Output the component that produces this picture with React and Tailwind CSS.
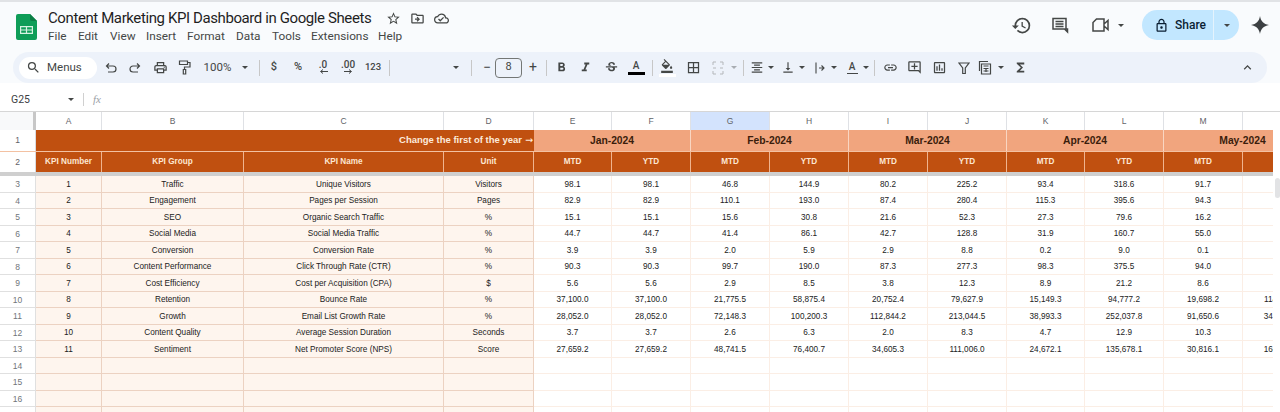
import React from "react";
import {
  MdSearch, MdOutlinePrint, MdStarBorder, MdOutlineDriveFileMove,
  MdOutlineCloudDone, MdHistory, MdOutlineLock,
  MdFormatBold, MdFormatItalic, MdStrikethroughS, MdFormatColorFill, MdBorderAll, MdInsertLink,
  MdOutlineAddComment, MdOutlineInsertChart, MdFunctions, MdExpandLess,
  MdFormatAlignCenter, MdVerticalAlignBottom,
} from "react-icons/md";

const GRID = "grid grid-cols-[36px_66px_142px_200px_90px_78px_79px_79px_79px_79px_79px_78px_79px_79px_79px]";
const COLS = ["A","B","C","D","E","F","G","H","I","J","K","L","M",""];
const META = [
  ["1","Traffic","Unique Visitors","Visitors"],
  ["2","Engagement","Pages per Session","Pages"],
  ["3","SEO","Organic Search Traffic","%"],
  ["4","Social Media","Social Media Traffic","%"],
  ["5","Conversion","Conversion Rate","%"],
  ["6","Content Performance","Click Through Rate (CTR)","%"],
  ["7","Cost Efficiency","Cost per Acquisition (CPA)","$"],
  ["8","Retention","Bounce Rate","%"],
  ["9","Growth","Email List Growth Rate","%"],
  ["10","Content Quality","Average Session Duration","Seconds"],
  ["11","Sentiment","Net Promoter Score (NPS)","Score"],
  ["","","",""],["","","",""],["","","",""],["","","",""],
];
const DATA = [
  ["98.1","98.1","46.8","144.9","80.2","225.2","93.4","318.6","91.7","47.9"],
  ["82.9","82.9","110.1","193.0","87.4","280.4","115.3","395.6","94.3","48.2"],
  ["15.1","15.1","15.6","30.8","21.6","52.3","27.3","79.6","16.2",""],
  ["44.7","44.7","41.4","86.1","42.7","128.8","31.9","160.7","55.0","25.4"],
  ["3.9","3.9","2.0","5.9","2.9","8.8","0.2","9.0","0.1",""],
  ["90.3","90.3","99.7","190.0","87.3","277.3","98.3","375.5","94.0","46.3"],
  ["5.6","5.6","2.9","8.5","3.8","12.3","8.9","21.2","8.6",""],
  ["37,100.0","37,100.0","21,775.5","58,875.4","20,752.4","79,627.9","15,149.3","94,777.2","19,698.2","114,475.4"],
  ["28,052.0","28,052.0","72,148.3","100,200.3","112,844.2","213,044.5","38,993.3","252,037.8","91,650.6","343,688.4"],
  ["3.7","3.7","2.6","6.3","2.0","8.3","4.7","12.9","10.3",""],
  ["27,659.2","27,659.2","48,741.5","76,400.7","34,605.3","111,006.0","24,672.1","135,678.1","30,816.1","166,494.2"],
  ["","","","","","","","","",""],["","","","","","","","","",""],["","","","","","","","","",""],["","","","","","","","","",""],
];
const MONTHS = ["Jan-2024","Feb-2024","Mar-2024","Apr-2024","May-2024"];
const SUBS = ["MTD","YTD","MTD","YTD","MTD","YTD","MTD","YTD","MTD",""];

const Slot = ({ className = "", children }) => (
  <div className={`flex items-center justify-center shrink-0 text-[#444746] ${className}`}>{children}</div>
);
const Sep = ({ className = "" }) => (
  <Slot className={className}><div className="w-px h-[16px] bg-[#c7c7c7]" /></Slot>
);
const Caret = ({ className = "w-[8px]" }) => (
  <Slot className={className}><div className="w-0 h-0 border-x-[3px] border-x-transparent border-t-[3px] border-t-[#444746]" /></Slot>
);
const Arrow = ({ flip }) => (
  <svg width="9" height="5" viewBox="0 0 9 5" className={flip ? "" : "rotate-180"}><path d="M0 2.500h7M5 .5l2.500 2-2.500 2" fill="none" stroke="#444746" strokeWidth="1" /></svg>
);
const Ico = ({ w = 14, h = 14, d, sw = 1.2, stroke = "#444746" }) => (
  <svg width={w} height={h} viewBox={`0 0 ${w} ${h}`} fill="none" stroke={stroke} strokeWidth={sw}><path d={d} /></svg>
);

function SheetsLogo() {
  return (
    <svg width="21" height="26" viewBox="0 0 21 26">
      <path d="M2 0h12l7 7v17a2 2 0 0 1-2 2H2a2 2 0 0 1-2-2V2a2 2 0 0 1 2-2z" fill="#0f9d58" />
      <path d="M14 0l7 7h-5a2 2 0 0 1-2-2z" fill="#0b7d45" />
      <path d="M4 12h13v8H4z M5.200 13.200v2.200h4.700v-2.200z M11.100 13.200v2.200h4.700v-2.200z M5.200 16.600v2.200h4.700v-2.200z M11.100 16.600v2.200h4.700v-2.200z" fill="#d8f3e3" fillRule="evenodd" />
    </svg>
  );
}
function Sparkle() {
  return (
    <svg width="18" height="18" viewBox="0 0 18 18"><path d="M9 0c.8 5 3.400 8 9 9-5.600 1-8.200 4-9 9-.8-5-3.400-8-9-9 5.600-1 8.200-4 9-9z" fill="#3c4043" /></svg>
  );
}

function TitleBar() {
  return (
    <div className="h-[50px] flex shrink-0 pl-[16px]">
      <div className="w-[32px] pt-[12px] shrink-0"><SheetsLogo /></div>
      <div className="w-[957px] shrink-0 pt-[6px]">
        <div className="flex items-center h-[21px]">
          <span className="text-[15px] tracking-[-0.4px] leading-[21px] text-[#1f1f1f] font-['Roboto',sans-serif] w-[338px] whitespace-nowrap">Content Marketing KPI Dashboard in Google Sheets</span>
          <MdStarBorder className="text-[#444746] w-[15px] h-[15px] mr-[9px]" />
          <MdOutlineDriveFileMove className="text-[#444746] w-[15px] h-[15px] mr-[9px]" />
          <MdOutlineCloudDone className="text-[#444746] w-[15px] h-[15px]" />
        </div>
        <div className="flex h-[17px] -mt-[1px] items-center text-[11.800px] text-[#444746] font-['Roboto',sans-serif]">
          <span className="w-[30px]">File</span><span className="w-[32px]">Edit</span><span className="w-[36px]">View</span>
          <span className="w-[41px]">Insert</span><span className="w-[49px]">Format</span><span className="w-[36px]">Data</span>
          <span className="w-[39px]">Tools</span><span className="w-[67px]">Extensions</span><span>Help</span>
        </div>
      </div>
      <div className="flex items-start flex-1 pt-[8px]">
        <Slot className="w-[32px] h-[30px]"><MdHistory className="w-[21px] h-[21px]" /></Slot>
        <Slot className="ml-[7px] w-[32px] h-[30px]">
          <Ico w={18} h={18} sw={1.500} d="M2 2.500h13v10.500h1.500v3l-3-3H2z M4.500 5.500h8 M4.500 8h8 M4.500 10.500h8" />
        </Slot>
        <Slot className="ml-[11px] w-[28px] h-[30px]">
          <Ico w={20} h={18} sw={1.500} d="M5.500 3h7.500v12H2V6.500z M13 8l4-3.500v9L13 10" />
        </Slot>
        <Caret className="ml-[2px] w-[8px] h-[30px]" />
        <div className="ml-[17px] w-[97px] h-[30px] rounded-full bg-[#c2e7ff] flex items-center text-[#0b1f33] font-['Roboto',sans-serif] text-[12px] font-medium shrink-0">
          <MdOutlineLock className="w-[15px] h-[15px] ml-[12px] mr-[6px]" />
          <span className="w-[38px]">Share</span>
          <div className="w-px h-full bg-[#e4f3fd]" />
          <Caret className="w-[25px]" />
        </div>
        <Slot className="ml-[12px] w-[18px] h-[30px]"><Sparkle /></Slot>
      </div>
    </div>
  );
}

function Toolbar() {
  const txt = "font-['Roboto',sans-serif] text-[#444746]";
  return (
    <div className="mx-[13px] h-[31px] rounded-full bg-[#edf2fa] flex items-center pl-[6px] shrink-0">
      <div className="w-[78px] h-[22px] bg-white rounded-full flex items-center shrink-0">
        <MdSearch className="ml-[7px] w-[15px] h-[15px] text-[#444746]" />
        <span className={`ml-[6px] text-[11.500px] ${txt}`}>Menus</span>
      </div>
      <Slot className="w-[25px] ml-px"><Ico w={12} h={12} d="M4 1.500L1.500 4 4 6.500M1.500 4H8a3 3 0 0 1 0 6H3" /></Slot>
      <Slot className="w-[23px]"><Ico w={12} h={12} d="M8 1.500L10.500 4 8 6.500M10.500 4H4a3 3 0 0 0 0 6h5" /></Slot>
      <Slot className="w-[28px]"><MdOutlinePrint className="w-[15px] h-[15px]" /></Slot>
      <Slot className="w-[20px]"><Ico w={13} h={15} d="M1.500 1h8v3.500h-8z M9.500 2.500h2.500v4.500H6.500v2.500 M5.300 9.500h2.400v4.500H5.300z" /></Slot>
      <Slot className={`w-[44px] text-[11.500px] pl-[3px] ${txt}`}>100%</Slot>
      <Caret className="w-[14px]" />
      <Sep className="w-[14px]" />
      <Slot className={`w-[16px] text-[11px] font-medium ${txt}`}>$</Slot>
      <Slot className={`w-[32px] text-[11px] font-medium ${txt}`}>%</Slot>
      <Slot className="w-[18px] flex-col leading-none">
        <span className={`text-[10px] leading-[8px] font-medium ${txt}`}>.0</span><Arrow />
      </Slot>
      <Slot className="w-[32px] flex-col leading-none">
        <span className={`text-[10px] leading-[8px] font-medium ${txt}`}>.00</span><Arrow flip />
      </Slot>
      <Slot className={`w-[18px] text-[9.500px] font-medium ${txt}`}>123</Slot>
      <Sep className="w-[14px]" />
      <div className="w-[53px] shrink-0" />
      <Caret className="w-[14px]" />
      <Sep className="w-[16px]" />
      <Slot className={`w-[16px] text-[14px] ${txt}`}>−</Slot>
      <div className={`w-[27px] h-[20px] border border-[#747775] rounded-[4px] flex items-center justify-center text-[11px] shrink-0 ${txt}`}>8</div>
      <Slot className={`w-[22px] text-[14px] ${txt}`}>+</Slot>
      <Sep className="w-[4px]" />
      <Slot className="w-[26px]"><MdFormatBold className="w-[15px] h-[15px]" /></Slot>
      <Slot className="w-[22px]"><MdFormatItalic className="w-[15px] h-[15px]" /></Slot>
      <Slot className="w-[30px]"><MdStrikethroughS className="w-[15px] h-[15px]" /></Slot>
      <Slot className="w-[20px] flex-col">
        <span className={`text-[10px] leading-[11px] font-medium ${txt}`}>A</span>
        <div className="w-[17px] h-[3px] bg-black mt-[1px]" />
      </Slot>
      <Sep className="w-[12px]" />
      <Slot className="w-[18px] flex-col">
        <MdFormatColorFill className="w-[14px] h-[14px]" />
        <div className="w-[17px] h-[3px] bg-white mt-[1px]" />
      </Slot>
      <Slot className="w-[34px]"><MdBorderAll className="w-[15px] h-[15px]" /></Slot>
      <Slot className="w-[16px]">
        <Ico w={12} h={14} sw={1} stroke="#b4b7ba" d="M1 4V1h3M8 1h3v3M1 10v3h3M8 13h3v-3M1 7h3M8 7h3" />
      </Slot>
      <Caret className="w-[16px] opacity-40" />
      <Sep className="w-[2px]" />
      <div className="w-[6px] shrink-0" />
      <Slot className="w-[14px]"><MdFormatAlignCenter className="w-[15px] h-[15px]" /></Slot>
      <div className="w-[3px] shrink-0" /><Caret className="w-[7px]" />
      <div className="w-[7px] shrink-0" />
      <Slot className="w-[14px]"><MdVerticalAlignBottom className="w-[15px] h-[15px]" /></Slot>
      <div className="w-[3px] shrink-0" /><Caret className="w-[7px]" />
      <div className="w-[8px] shrink-0" />
      <Slot className="w-[14px]"><Ico d="M3 1.500v11M6 7h5M8.500 4.500L11 7l-2.500 2.500" sw={1.100} /></Slot>
      <div className="w-[3px] shrink-0" /><Caret className="w-[7px]" />
      <div className="w-[8px] shrink-0" />
      <Slot className="w-[14px] flex-col">
        <span className={`text-[10px] leading-[11px] font-medium ${txt}`}>A</span>
        <div className="w-[11px] h-px bg-[#444746] mt-[1px]" />
      </Slot>
      <div className="w-[3px] shrink-0" /><Caret className="w-[7px]" />
      <div className="w-[5px] shrink-0" />
      <Sep className="w-[1px]" />
      <Slot className="w-[30px]"><MdInsertLink className="w-[15px] h-[15px]" /></Slot>
      <Slot className="w-[18px]"><MdOutlineAddComment className="w-[15px] h-[15px]" /></Slot>
      <Slot className="w-[32px]"><MdOutlineInsertChart className="w-[15px] h-[15px]" /></Slot>
      <Slot className="w-[18px]"><Ico w={12} h={14} d="M1 2h10L7.300 7v5.500H4.700V7z" /></Slot>
      <Slot className="w-[24px]">
        <Ico w={14} h={15} d="M1.500 11V1.500h8.500 M3.500 4h9v10h-9z M5.500 6h5 M5.500 8.500h5 M5.500 11h5 M8 8v4" />
      </Slot>
      <Caret className="w-[8px]" />
      <Slot className="w-[30px]"><MdFunctions className="w-[15px] h-[15px]" /></Slot>
      <div className="flex-1" />
      <Slot className="w-[20px] mr-[10px]"><MdExpandLess className="w-[15px] h-[15px]" /></Slot>
    </div>
  );
}

function FormulaBar() {
  return (
    <div className="h-[24px] mt-[5px] flex items-center border-b border-[#d6d6d6] shrink-0 font-['Roboto',sans-serif]">
      <span className="ml-[11px] w-[56px] text-[10.500px] text-[#3c4043]">G25</span>
      <Caret className="w-[8px]" />
      <div className="ml-[8px] w-px h-[13px] bg-[#d0d0d0]" />
      <span className="ml-[9px] text-[11px] italic text-[#9aa0a6] font-['Liberation_Serif',serif]">fx</span>
    </div>
  );
}

function Sheet() {
  const arial = "font-['Liberation_Sans',Arial,sans-serif]";
  return (
    <div className={`flex flex-1 min-h-0 overflow-hidden ${arial}`}>
      <div className="w-[1273px] shrink-0 overflow-hidden">
        <div className={`${GRID} h-[18px]`}>
          <div className="bg-[#f8f9fa] border-r-[3px] border-[#c7c7c7]" />
          {COLS.map((c, i) => (
            <div key={i} className={`flex items-center justify-center text-[8.500px] text-[#5f6368] border-r border-[#dfe1e5] ${c === "G" ? "bg-[#d3e3fd] text-[#0b57d0]" : "bg-white"}`}>{c}</div>
          ))}
        </div>
        <div className={`${GRID} h-[21px]`}>
          <div className="flex items-center justify-center text-[8.500px] text-[#5f6368] bg-white border-r border-[#dadce0]">1</div>
          <div className="col-span-4 bg-[#c05010] flex items-center justify-end pr-[1px] text-[9.500px] font-bold text-[#fdebdc] whitespace-nowrap">Change the first of the year <span className="font-['DejaVu_Sans',sans-serif] font-normal ml-[3px]">→</span></div>
          {MONTHS.map((m) => (
            <div key={m} className="col-span-2 bg-[#f1a57e] border-r border-[#f9d6c2] flex items-center justify-center text-[10.300px] font-bold text-[#3a1d0c]">{m}</div>
          ))}
        </div>
        <div className={`${GRID} h-[21px] border-t border-[#f3c1a2]`}>
          <div className="flex items-center justify-center text-[8.500px] text-[#5f6368] bg-white border-r border-[#dadce0]">2</div>
          {["KPI Number","KPI Group","KPI Name","Unit"].map((h) => (
            <div key={h} className="bg-[#c05010] border-r border-[#f0b48f] flex items-center justify-center text-[8.200px] font-bold text-[#fde6d2]">{h}</div>
          ))}
          {SUBS.map((h, i) => (
            <div key={i} className="bg-[#c05010] border-r border-[#f0b48f] flex items-center justify-center text-[8.200px] font-bold text-[#fde6d2]">{h}</div>
          ))}
        </div>
        <div className="h-[4px] bg-[#cfcfcf]" />
        {META.map((r, i) => (
          <div key={i} className={`${GRID} h-[16.500px]`}>
            <div className="flex items-center justify-center pt-[2px] text-[8.500px] text-[#70757a] bg-white border-r border-b border-[#e0e0e0]">{i + 3}</div>
            {r.map((t, j) => (
              <div key={j} className="bg-[#fef5ee] border-r border-b border-[#ecd2c2] flex items-center justify-center pt-[2px] text-[8.200px] text-[#222]">{t}</div>
            ))}
            {DATA[i].map((t, j) => (
              <div key={j} className="bg-white border-r border-b border-[#fbeee5] flex items-center justify-center pt-[2px] text-[8.200px] text-[#222] whitespace-nowrap overflow-hidden">{t}</div>
            ))}
          </div>
        ))}
      </div>
      <div className="flex-1 bg-white pt-[66px] pl-[2px]">
        <div className="w-[5px] h-[20px] rounded-full bg-[#e2e3e5]" />
      </div>
    </div>
  );
}

export default function App() {
  return (
    <div className="w-[1280px] h-[412px] overflow-hidden flex flex-col bg-[#f9fbfd]">
      <div className="h-[2px] bg-[#e1e3e6] shrink-0" />
      <TitleBar />
      <Toolbar />
      <div className="bg-white flex flex-col flex-1 min-h-0">
        <FormulaBar />
        <Sheet />
      </div>
    </div>
  );
}
